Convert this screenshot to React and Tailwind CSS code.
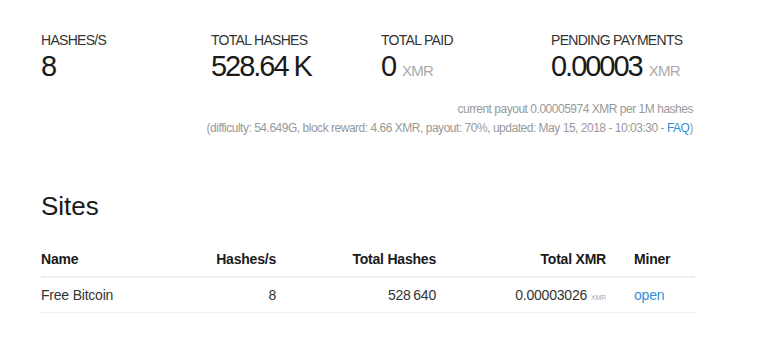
export default function App() {
  const stats = [
    { label: "HASHES/S", value: "8" },
    { label: "TOTAL HASHES", value: "528.64 K" },
    { label: "TOTAL PAID", value: "0", unit: "XMR" },
    { label: "PENDING PAYMENTS", value: "0.00003", unit: "XMR" },
  ];
  return (
    <div
      className="w-[768px] h-[348px] bg-white text-[#222] overflow-hidden"
      style={{ fontFamily: '"Liberation Sans", Arial, sans-serif' }}
    >
      <div className="pl-[41px] w-[695px] pt-[30px]">
        <div className="grid grid-cols-[170px_170px_170px_144px]">
          {stats.map((s) => (
            <div key={s.label}>
              <div className="text-[14px] leading-[20px] tracking-[-0.05em] text-[#333]">
                {s.label}
              </div>
              <div className="text-[29px] leading-[32px] tracking-[-0.07em] text-[#1a1a1a] whitespace-nowrap">
                {s.value}
                {s.unit && (
                  <span className="text-[15px] text-[#aaa] tracking-[-0.05em] ml-[7px]">
                    {s.unit}
                  </span>
                )}
              </div>
            </div>
          ))}
        </div>

        <div className="mt-[13px] text-right text-[12px] leading-[19px] tracking-[-0.04em] text-[#999] pr-[2px]">
          <div>current payout 0.00005974 XMR per 1M hashes</div>
          <div>
            (difficulty: 54.649G, block reward: 4.66 XMR, payout: 70%, updated: May 15, 2018 - 10:03:30 -{" "}
            <span className="text-[#2f8fd8]">FAQ</span>)
          </div>
        </div>

        <h2 className="mt-[53px] text-[26px] leading-[30px] text-[#1a1a1a]">Sites</h2>

        <div className="mt-[20px] text-[14px] leading-[20px] tracking-[-0.015em]">
          <div className="grid grid-cols-[155px_80px_160px_170px_89px] font-bold text-[#1a1a1a] pt-[8px] pb-[7px] border-b-2 border-[#eeeeee]">
            <div>Name</div>
            <div className="text-right">Hashes/s</div>
            <div className="text-right">Total Hashes</div>
            <div className="text-right">Total XMR</div>
            <div className="pl-[28px]">Miner</div>
          </div>
          <div className="grid grid-cols-[155px_80px_160px_170px_89px] text-[#333] pt-[7px] pb-[4px] border-b border-[#eeeeee]">
            <div>Free Bitcoin</div>
            <div className="text-right">8</div>
            <div className="text-right">528{"\u2009"}640</div>
            <div className="text-right">
              0.00003026
              <span className="text-[7px] text-[#aaa] ml-[4px]">XMR</span>
            </div>
            <div className="pl-[28px] text-[#2f8fd8]">open</div>
          </div>
        </div>
      </div>
    </div>
  );
}
